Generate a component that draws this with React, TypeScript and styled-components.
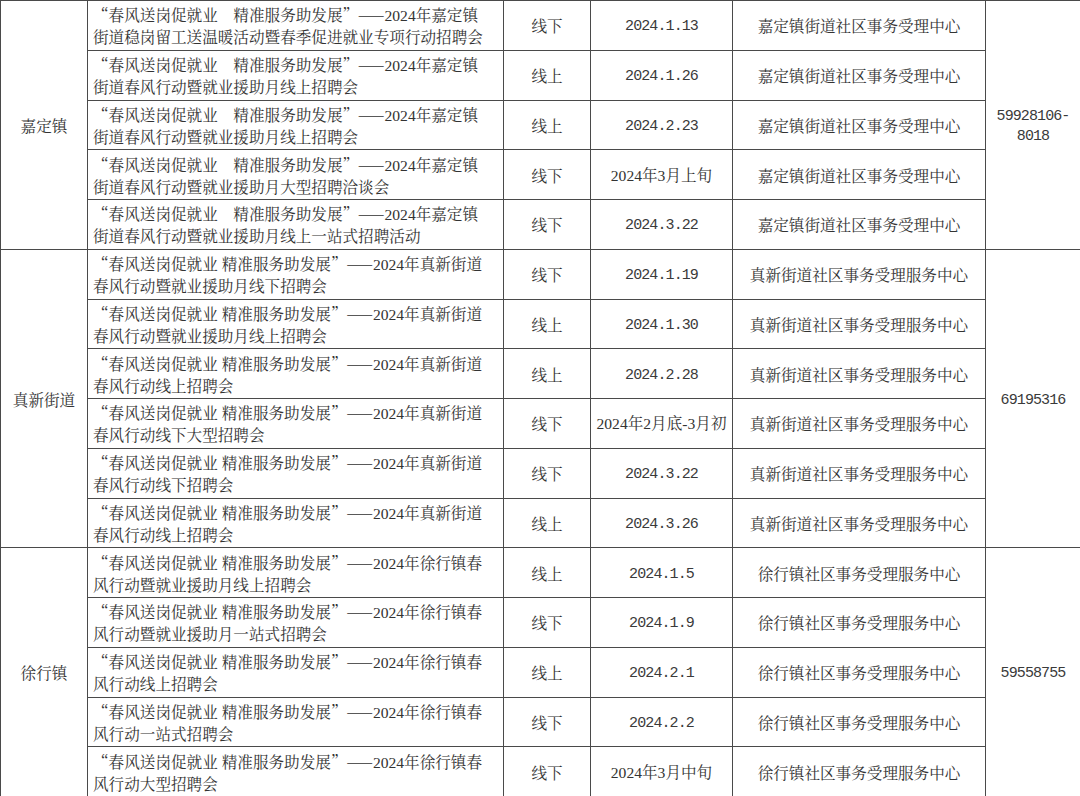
import React from "react";
import styled, { createGlobalStyle } from "styled-components";

const Global = createGlobalStyle`
  html, body { margin: 0; padding: 0; background: #fff; }
  body { font-family: "Noto Serif CJK SC", "Noto Sans CJK SC", serif; color: #333; }
`;

const Table = styled.table`
  border-collapse: collapse;
  table-layout: fixed;
  width: 1080px;
  height: 796px;
  font-size: 15.6px;
`;

const Col = styled.col<{ $w: number }>`
  width: ${(p) => p.$w}px;
`;

const Row = styled.tr`
  height: 49.75px;
`;

const Cell = styled.td<{ $mono?: boolean }>`
  border: 1px solid #4a4a4a;
  padding: ${(p) => (p.$mono ? "4px 0 0" : "0")};
  text-align: center;
  vertical-align: middle;
  line-height: 20px;
  font-family: ${(p) =>
    p.$mono
      ? `"Liberation Mono", "Noto Sans CJK SC", monospace`
      : `"Noto Serif CJK SC", "Noto Sans CJK SC", serif`};
  font-size: ${(p) => (p.$mono ? "15px" : "15.6px")};
  letter-spacing: ${(p) => (p.$mono ? "-0.9px" : "0")};
  color: ${(p) => (p.$mono ? "#3a3a3a" : "#333")};
  overflow: hidden;
`;

const DescCell = styled(Cell)`
  padding-left: 5px;
  text-align: left;
`;

const Line = styled.span`
  display: block;
  white-space: nowrap;
`;

const Latin = styled.span`
  font-family: "Liberation Serif", serif;
`;

function Mixed({ text }: { text: string }) {
  const parts = text.split(/([0-9\-]+)/);
  return (
    <>
      {parts.map((p, i) =>
        /^[0-9\-]+$/.test(p) ? <Latin key={i}>{p}</Latin> : <React.Fragment key={i}>{p}</React.Fragment>
      )}
    </>
  );
}

type Item = { l1: string; l2: string; mode: string; date: string; mono: boolean; place: string };

const Q1 = "“春风送岗促就业　精准服务助发展”——2024年嘉定镇";
const Q2 = "“春风送岗促就业 精准服务助发展”——2024年真新街道";
const Q3 = "“春风送岗促就业 精准服务助发展”——2024年徐行镇春";

const groups: { name: string; phone: string[]; items: Item[] }[] = [
  {
    name: "嘉定镇",
    phone: ["59928106-", "8018"],
    items: [
      { l1: Q1, l2: "街道稳岗留工送温暖活动暨春季促进就业专项行动招聘会", mode: "线下", date: "2024.1.13", mono: true, place: "嘉定镇街道社区事务受理中心" },
      { l1: Q1, l2: "街道春风行动暨就业援助月线上招聘会", mode: "线上", date: "2024.1.26", mono: true, place: "嘉定镇街道社区事务受理中心" },
      { l1: Q1, l2: "街道春风行动暨就业援助月线上招聘会", mode: "线上", date: "2024.2.23", mono: true, place: "嘉定镇街道社区事务受理中心" },
      { l1: Q1, l2: "街道春风行动暨就业援助月大型招聘洽谈会", mode: "线下", date: "2024年3月上旬", mono: false, place: "嘉定镇街道社区事务受理中心" },
      { l1: Q1, l2: "街道春风行动暨就业援助月线上一站式招聘活动", mode: "线下", date: "2024.3.22", mono: true, place: "嘉定镇街道社区事务受理中心" },
    ],
  },
  {
    name: "真新街道",
    phone: ["69195316"],
    items: [
      { l1: Q2, l2: "春风行动暨就业援助月线下招聘会", mode: "线下", date: "2024.1.19", mono: true, place: "真新街道社区事务受理服务中心" },
      { l1: Q2, l2: "春风行动暨就业援助月线上招聘会", mode: "线上", date: "2024.1.30", mono: true, place: "真新街道社区事务受理服务中心" },
      { l1: Q2, l2: "春风行动线上招聘会", mode: "线上", date: "2024.2.28", mono: true, place: "真新街道社区事务受理服务中心" },
      { l1: Q2, l2: "春风行动线下大型招聘会", mode: "线下", date: "2024年2月底-3月初", mono: false, place: "真新街道社区事务受理服务中心" },
      { l1: Q2, l2: "春风行动线下招聘会", mode: "线下", date: "2024.3.22", mono: true, place: "真新街道社区事务受理服务中心" },
      { l1: Q2, l2: "春风行动线上招聘会", mode: "线上", date: "2024.3.26", mono: true, place: "真新街道社区事务受理服务中心" },
    ],
  },
  {
    name: "徐行镇",
    phone: ["59558755"],
    items: [
      { l1: Q3, l2: "风行动暨就业援助月线上招聘会", mode: "线上", date: "2024.1.5", mono: true, place: "徐行镇社区事务受理服务中心" },
      { l1: Q3, l2: "风行动暨就业援助月一站式招聘会", mode: "线下", date: "2024.1.9", mono: true, place: "徐行镇社区事务受理服务中心" },
      { l1: Q3, l2: "风行动线上招聘会", mode: "线上", date: "2024.2.1", mono: true, place: "徐行镇社区事务受理服务中心" },
      { l1: Q3, l2: "风行动一站式招聘会", mode: "线下", date: "2024.2.2", mono: true, place: "徐行镇社区事务受理服务中心" },
      { l1: Q3, l2: "风行动大型招聘会", mode: "线下", date: "2024年3月中旬", mono: false, place: "徐行镇社区事务受理服务中心" },
    ],
  },
];

export default function App() {
  return (
    <>
      <Global />
      <Table>
        <colgroup>
          <Col $w={87} />
          <Col $w={416} />
          <Col $w={87} />
          <Col $w={142} />
          <Col $w={253} />
          <Col $w={95} />
        </colgroup>
        <tbody>
          {groups.map((g) =>
            g.items.map((it, i) => (
              <Row key={g.name + i}>
                {i === 0 && <Cell rowSpan={g.items.length}>{g.name}</Cell>}
                <DescCell>
                  <Line>
                    <Mixed text={it.l1} />
                  </Line>
                  <Line>{it.l2}</Line>
                </DescCell>
                <Cell>{it.mode}</Cell>
                <Cell $mono={it.mono}>{it.mono ? it.date : <Mixed text={it.date} />}</Cell>
                <Cell>{it.place}</Cell>
                {i === 0 && (
                  <Cell rowSpan={g.items.length} $mono>
                    {g.phone.map((p) => (
                      <Line key={p}>{p}</Line>
                    ))}
                  </Cell>
                )}
              </Row>
            ))
          )}
        </tbody>
      </Table>
    </>
  );
}
